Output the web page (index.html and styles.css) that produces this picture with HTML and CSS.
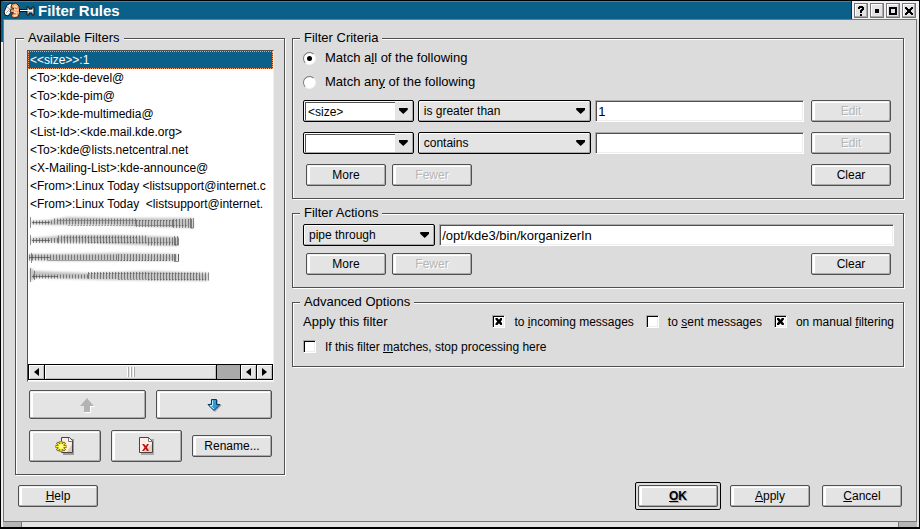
FILE: index.html
```html
<!DOCTYPE html>
<html lang="en">
<head>
<meta charset="utf-8">
<title>Filter Rules</title>
<link rel="stylesheet" href="styles.css">
</head>
<body>
<div class="window">
  <header class="titlebar">
    <svg class="app-icon" width="32" height="18" viewBox="0 0 32 18" aria-hidden="true">
      <path d="M1 11 4 4 8 2 11 4 10 9 5 15 2 14Z" fill="#f4f4f4" stroke="#111"/>
      <path d="M4 6 7 8 9 4M3 12 7 8" fill="none" stroke="#a8a8a8"/>
      <path d="M9 3 13 2 16 5 17 11 15 16 10 17 8 14 11 12 7 11 8 8 11 8 8 6Z" fill="#f3a56f" stroke="#4b2113"/>
      <path d="M11 5 14 6M11 8 15 9M11 11 14 12M11 15 14 14" stroke="#ffe0bd" stroke-width="1.5"/>
      <path d="M12 7 14 8M10 12 13 13" stroke="#d6652e"/>
      <path d="M16 9.5H25" stroke="#111" stroke-width="3"/>
      <path d="M24 6H26V8H29V6H31V14H29V12H26V14H24Z" fill="#ccc" stroke="#111"/>
      <path d="M17 9.5H30" stroke="#fff"/>
    </svg>
    <h1>Filter Rules</h1>
    <div class="window-buttons">
      <button type="button" aria-label="Help"><svg width="10" height="10" viewBox="0 0 10 10"><path d="M2 3V1H3V0H7V1H8V4H7V5H6V7H4V4H5V3H6V2H4V3ZM4 8H6V10H4Z"/></svg></button>
      <button type="button" aria-label="Minimize"><svg width="10" height="10" viewBox="0 0 10 10"><path d="M3 3H7V7H3Z"/></svg></button>
      <button type="button" aria-label="Maximize"><svg width="10" height="10" viewBox="0 0 10 10"><path fill-rule="evenodd" d="M1 1H9V9H1ZM3 3V7H7V3Z"/></svg></button>
      <button type="button" aria-label="Close"><svg width="10" height="10" viewBox="0 0 10 10"><path d="M1 1H3V2H4V3H6V2H7V1H9V3H8V4H7V6H8V7H9V9H7V8H6V7H4V8H3V9H1V7H2V6H3V4H2V3H1Z"/></svg></button>
    </div>
  </header>

  <form class="panel">
    <main class="columns">
      <fieldset class="group filters">
        <legend>Available Filters</legend>
        <div class="listbox">
          <ul role="listbox" aria-label="Available Filters">
            <li role="option" aria-selected="true">&lt;&lt;size&gt;&gt;:1</li>
            <li role="option">&lt;To&gt;:kde-devel@</li>
            <li role="option">&lt;To&gt;:kde-pim@</li>
            <li role="option">&lt;To&gt;:kde-multimedia@</li>
            <li role="option">&lt;List-Id&gt;:&lt;kde.mail.kde.org&gt;</li>
            <li role="option">&lt;To&gt;:kde@lists.netcentral.net</li>
            <li role="option">&lt;X-Mailing-List&gt;:kde-announce@</li>
            <li role="option">&lt;From&gt;:Linux Today &lt;listsupport@internet.c</li>
            <li role="option">&lt;From&gt;:Linux Today  &lt;listsupport@internet.</li>
          </ul>
          <svg class="smudges" width="200" height="74" viewBox="0 0 200 74" aria-hidden="true">
            <defs><filter id="soft" x="-5%" y="-50%" width="110%" height="200%"><feGaussianBlur stdDeviation="1.3 .9"/></filter><filter id="smear" x="-5%" y="-50%" width="110%" height="200%"><feGaussianBlur stdDeviation=".3 .7"/></filter></defs>
            <g filter="url(#soft)" fill="#c4c4c4">
              <path d="M3 8 20 7 40 4 90 5 165 5 166 15 125 14 80 12 25 12 3 11Z"/>
              <path d="M3 25 40 22 90 22 150 24 150 33 110 32 60 30 3 29Z"/>
              <path d="M1 41 30 41 90 40 149 41 149 48 80 48 30 48 1 47Z"/>
              <path d="M2 55 8 58 60 60 120 58 180 60 180 68 80 67 8 65 2 68Z"/>
            </g>
            <g fill="none" stroke="#444" stroke-opacity=".6" filter="url(#smear)">
              <path d="M4 9.500H22M4 27.500H22M1 44.500H22M4 63.500H30"/>
              <path d="M2.500 4V15M2.500 22V32M3.500 40V50M2.500 55V69M6.500 58V67"/>
              <g stroke-dasharray="1 2">
                <path d="M5 9.500H26" stroke-width="4"/><path d="M26 8.500H108" stroke-width="6"/><path d="M108 10.500H145" stroke-width="7"/><path d="M145 10.500H166" stroke-width="9"/>
                <path d="M5 27.500H30" stroke-width="5"/><path d="M30 26.500H120" stroke-width="8"/><path d="M120 28.500H152" stroke-width="8"/>
                <path d="M1 44.500H90" stroke-width="6"/><path d="M90 44.500H151" stroke-width="7"/>
                <path d="M5 63.500H60" stroke-width="4"/><path d="M60 62.500H120" stroke-width="7"/><path d="M120 63.500H181" stroke-width="8"/>
              </g>
              <path d="M30 7.500H150M40 12.500H160M35 24.500H110M60 29.500H145M20 47.500H140M60 60.500H170M90 66.500H178" stroke-dasharray="2 1" stroke-opacity=".4"/>
              <path d="M162.500 5V15H165.500V5M146.500 23V32H149.500V23M146.500 41V48.500H150.500V41"/>
            </g>
          </svg>
          <div class="scrollbar">
            <button type="button" class="left" aria-label="Scroll left"></button>
            <span class="thumb"></span><span class="track"></span>
            <button type="button" class="left" aria-label="Scroll back"></button>
            <button type="button" class="right" aria-label="Scroll right"></button>
          </div>
        </div>
        <div class="list-buttons move">
          <button type="button" class="push" aria-label="Move up" disabled><svg width="16" height="16" viewBox="0 0 16 16"><path d="M9 2 16 10H12V16H6V10Z" fill="#fff"/><path d="M8 1 15 9H11V15H5V9H1Z" fill="#b3b3b3"/></svg></button>
          <button type="button" class="push" aria-label="Move down"><svg width="16" height="16" viewBox="0 0 16 16"><path d="M6 3H12V8H16L9 15 3 9Z" fill="#aaa"/><path d="M5.500 2.500H10.500V7.500H14L8 13.500 2 7.500H5.500Z" fill="#359bd5" stroke="#07385e"/><path d="M6.500 3.500V8.500H4L8 12" fill="none" stroke="#b9edff"/></svg></button>
        </div>
        <div class="list-buttons edit">
          <button type="button" class="push" aria-label="New filter"><svg width="20" height="20" viewBox="0 0 20 20"><path d="M8 3H19V19H8Z" fill="#999"/><path d="M6.500 1.500H14.500L17.500 4.500V16.500H6.500Z" fill="#faeee6" stroke="#444"/><path d="M13.500 2V5.500H17" fill="#fff" stroke="#777"/><path d="M12 16H17V8Z" fill="#eac7b2"/><path d="M6 5V16M0.500 10.500H11.500M2 6.500 10 14.500M10 6.500 2 14.500" stroke="#6d6500" stroke-width="3"/><path d="M6 5.500V15.500M1 10.500H11M2.500 7 9.500 14M9.500 7 2.500 14" stroke="#ffef23" stroke-width="1.500"/><circle cx="6" cy="10.500" r="2.500" fill="#ffff8d"/></svg></button>
          <button type="button" class="push" aria-label="Delete filter"><svg width="16" height="20" viewBox="0 0 16 20"><path d="M3 3H16V19H3Z" fill="#aaa"/><path d="M1.500 1.500H10.500L14.500 5.500V16.500H1.500Z" fill="#faf0e9" stroke="#444"/><path d="M10.500 2V5.500H14" fill="#fff" stroke="#777"/><path d="M5 16H14V8Z" fill="#edcfbd"/><path d="M4 8H6L8 10 9 8H11L9 11.500 11 15H9L7.500 13 6 15H4L6.500 11.500Z" fill="#c50f16"/></svg></button>
          <button type="button" class="push text">Rename...</button>
        </div>
      </fieldset>

      <div class="rules">
        <fieldset class="group criteria">
          <legend>Filter Criteria</legend>
          <label class="option"><input type="radio" name="match" checked><span>Match a<u>l</u>l of the following</span></label>
          <label class="option"><input type="radio" name="match"><span>Match an<u>y</u> of the following</span></label>
          <div class="criterion first">
            <div class="combo editable"><input type="text" value="&lt;size&gt;" aria-label="Field 1"></div>
            <div class="combo function"><select aria-label="Comparison 1"><option>is greater than</option><option>contains</option></select></div>
            <input class="field" type="text" value="1" aria-label="Value 1">
            <button type="button" class="push text" disabled>Edit</button>
          </div>
          <div class="criterion">
            <div class="combo editable"><input type="text" aria-label="Field 2"></div>
            <div class="combo function"><select aria-label="Comparison 2"><option>contains</option><option>is greater than</option></select></div>
            <input class="field" type="text" aria-label="Value 2">
            <button type="button" class="push text" disabled>Edit</button>
          </div>
          <div class="row-buttons">
            <button type="button" class="push text">More</button>
            <button type="button" class="push text" disabled>Fewer</button>
            <button type="button" class="push text last">Clear</button>
          </div>
        </fieldset>

        <fieldset class="group actions">
          <legend>Filter Actions</legend>
          <div class="action">
            <div class="combo"><select aria-label="Action"><option>pipe through</option></select></div>
            <input class="field" type="text" value="/opt/kde3/bin/korganizerIn" aria-label="Command">
          </div>
          <div class="row-buttons">
            <button type="button" class="push text">More</button>
            <button type="button" class="push text" disabled>Fewer</button>
            <button type="button" class="push text last">Clear</button>
          </div>
        </fieldset>

        <fieldset class="group advanced">
          <legend>Advanced Options</legend>
          <div class="apply-to">
            <span class="caption">Apply this filter</span>
            <label class="option"><input type="checkbox" checked><span>to <u>i</u>ncoming messages</span></label>
            <label class="option"><input type="checkbox"><span>to <u>s</u>ent messages</span></label>
            <label class="option"><input type="checkbox" checked><span>on manual <u>f</u>iltering</span></label>
          </div>
          <label class="option"><input type="checkbox"><span>If this filter <u>m</u>atches, stop processing here</span></label>
        </fieldset>
      </div>
    </main>

    <footer class="dialog-buttons">
      <button type="button" class="push text help"><u>H</u>elp</button>
      <span class="default"><button type="submit" class="push text"><u>O</u>K</button></span>
      <button type="button" class="push text"><u>A</u>pply</button>
      <button type="button" class="push text"><u>C</u>ancel</button>
    </footer>
  </form>
  <div class="resize-bar"><span></span><span></span><span></span></div>
</div>
</body>
</html>
```
FILE: styles.css
```css
:root {
  --face: #dcdcdc;
  --button: #e4e4e4;
  --accent: #0a6088;
  --dark: #505050;
  --mid: #ababab;
}
* { box-sizing: border-box; }
body { margin: 0; background: #000; }
body, button, input, select {
  font: 12px/14px "Liberation Sans", Arial, sans-serif;
  color: #000;
}
.window {
  display: flex;
  flex-direction: column;
  min-height: 100vh;
  padding: 0 2px 0 3px;
  border: solid #000;
  border-width: 1px 1px 2px 0;
  background: linear-gradient(#000, #000) left / 1px 100% no-repeat,
    linear-gradient(var(--accent) 41px, #eee 41px) left / 3px 100% no-repeat, #e4e4e4;
}

/* Title bar */
.titlebar {
  display: flex;
  height: 18px;
  background: var(--accent);
  border-top: 1px solid #2d8bb8;
  margin-right: -2px;
}
.app-icon { display: block; flex: none; margin-top: -1px; }
.titlebar h1 {
  flex: 1;
  margin: 0 0 0 3px;
  font-size: 15px;
  line-height: 18px;
  color: #fff;
}
.window-buttons {
  display: flex;
  gap: 2px;
  margin-top: -1px;
  padding: 2px 3px 0 2px;
  background: #f4eff4;
  border-left: 1px solid #222;
}
.window-buttons button {
  display: grid;
  place-items: center;
  width: 14px;
  height: 15px;
  padding: 0;
  border: 1px solid #777;
  background: var(--button);
  box-shadow: inset -1px -1px #aaa, inset 1px 1px #fff;
}

/* Panel */
.panel {
  flex: 1;
  display: flex;
  flex-direction: column;
  gap: 7px;
  padding: 11px 12px 11px 11px;
  background: var(--face);
  border: 1px solid #777;
}
.columns {
  flex: 1;
  display: grid;
  grid-template-columns: minmax(0, 270fr) minmax(0, 612fr);
  gap: 7px;
}
.group {
  min-width: 0;
  margin: 0;
  padding: 0 9px 12px 10px;
  border: 1px solid var(--dark);
  box-shadow: 1px 1px #fff, inset 1px 1px #fff;
}
.group legend {
  margin-left: -3px;
  padding: 0 4px;
  background: var(--face);
}
.group legend, .criteria .option, .caption, .field { font-size: 13px; }
.push {
  display: grid;
  place-items: center;
  padding: 0;
  border: 1px solid var(--dark);
  border-radius: 2px;
  background: var(--button);
  box-shadow: inset -1px -1px var(--mid), inset 1px 1px #f0f0f0, inset 3px 2px #fff;
}
.push.text {
  display: block;
  flex: none;
  width: 80px;
  height: 22px;
}
.push:disabled { color: #b5b5b5; text-shadow: 1px 1px #fff; }

/* Filter list */
.filters {
  display: flex;
  flex-direction: column;
  padding: 5px 10px 12px 11px;
}
.listbox {
  flex: 1;
  display: flex;
  flex-direction: column;
  min-width: 0;
  border: 1px solid;
  border-color: var(--dark) #f0f0f0 #f0f0f0 var(--dark);
  background: #fff;
}
.listbox ul { margin: 0; padding: 0; list-style: none; }
.listbox li {
  padding: 2px;
  overflow: hidden;
  white-space: pre;
}
.listbox li[aria-selected="true"] {
  padding: 1px;
  border: 1px dotted #ff9c62;
  background: var(--accent);
  color: #fff;
}
.smudges { display: block; }
.scrollbar {
  display: flex;
  gap: 1px;
  height: 16px;
  margin-top: auto;
  margin-bottom: 1px;
  border: 1px solid #000;
  background: #000;
}
.scrollbar button, .thumb {
  border: 0;
  padding: 0;
  background: var(--button);
  box-shadow: inset 1px 1px #fff, inset -1px -1px #bbb;
}
.scrollbar button { display: grid; place-items: center; width: 15px; }
.scrollbar button::before {
  content: "";
  width: 5px;
  height: 8px;
  background: #000;
  clip-path: polygon(100% 0, 100% 100%, 0 50%);
}
.scrollbar .right::before { clip-path: polygon(0 0, 0 100%, 100% 50%); }
.thumb { flex: 172; display: grid; place-items: center; }
.thumb::before {
  content: "";
  width: 8px;
  height: 10px;
  background: repeating-linear-gradient(90deg, #fff 0 1px, #aaa 1px 2px, var(--button) 2px 3px);
}
.track { flex: 23; background: #aaa; }
.list-buttons { display: flex; gap: 10px; align-items: center; margin: 8px 2px 0; }
.list-buttons .push:not(.text) { flex: 1; }
.move .push { height: 29px; }
.edit { margin-top: 11px; }
.edit .push:not(.text) { height: 32px; }

/* Rule groups */
.rules { display: flex; flex-direction: column; gap: 7px; }
.option { display: flex; align-items: center; gap: 9px; }
.option input { flex: none; appearance: none; width: 13px; height: 13px; margin: 0; background: #fff; }
.option input[type="radio"] {
  display: grid;
  place-items: center;
  border: 1px solid;
  border-color: #777 #f4f4f4 #f4f4f4 #777;
  border-radius: 50%;
}
.option input[type="radio"]:checked::before {
  content: "";
  width: 5px;
  height: 5px;
  border-radius: 50%;
  background: #000;
}
.option input[type="checkbox"] {
  display: grid;
  place-items: center;
  border: 1px solid;
  border-color: var(--mid) #fff #fff var(--mid);
  box-shadow: inset 1px 1px #000, inset -1px -1px #eee;
}
.option input[type="checkbox"]:checked::before {
  content: "";
  width: 7px;
  height: 7px;
  background: #000;
  clip-path: polygon(0 0, 29% 0, 50% 25%, 71% 0, 100% 0, 100% 20%, 75% 50%, 100% 80%, 100% 100%, 71% 100%, 50% 75%, 29% 100%, 0 100%, 0 80%, 25% 50%, 0 20%);
}
.criteria { padding-top: 1px; }
.criteria .option { height: 24px; }
.criterion { display: flex; gap: 4px; margin-top: 10px; }
.criterion.first { margin-top: 6px; }
.criterion .push { margin: 0 3px; }
.criterion .editable { flex: 111 1 0; }
.criterion .function { flex: 175 1 0; }
.criterion .field { flex: 207 1 0; }
.combo {
  display: grid;
  grid-template-columns: minmax(0, 1fr) 18px;
  align-items: center;
  min-width: 0;
  height: 22px;
  border: 1px solid #000;
  border-radius: 2px;
  background: var(--button);
  box-shadow: inset -1px -1px var(--mid), inset 1px 1px #fff;
}
.combo::after {
  content: "";
  grid-area: 1 / 2;
  width: 9px;
  height: 6px;
  margin-left: 4px;
  background: #000;
  clip-path: polygon(0 0, 100% 0, 100% 30%, 50% 100%, 0 30%);
  pointer-events: none;
}
.combo select {
  grid-area: 1 / 1 / 2 / 3;
  width: 100%;
  height: 20px;
  padding: 0 20px 0 5px;
  border: 0;
  appearance: none;
  background: transparent;
}
.combo input {
  width: auto;
  min-width: 0;
  height: 18px;
  margin-left: 1px;
  padding: 0 2px;
  border: solid var(--dark);
  border-width: 1px 0 0 1px;
  background: #fff;
}
.field {
  min-width: 0;
  height: 22px;
  padding: 0 2px;
  border: 1px solid;
  border-color: var(--mid) #fff #fff var(--mid);
  background: #fff;
  box-shadow: inset 1px 1px var(--dark), inset -1px -1px #eee;
}
.row-buttons { display: flex; gap: 6px; margin: 10px 3px 0; }
.row-buttons .last { margin-left: auto; }
.actions { padding-top: 4px; }
.actions .row-buttons { margin-top: 7px; }
.action { display: flex; gap: 4px; }
.action .combo { flex: 132 1 0; }
.action .field { flex: 455 1 0; }
.advanced { padding-bottom: 7px; }
.apply-to { display: flex; gap: 12px; align-items: center; }
.apply-to .caption { margin-right: auto; }
.advanced .option { height: 25px; }

/* Dialog buttons */
.dialog-buttons {
  display: flex;
  align-items: center;
  gap: 12px;
  padding: 0 2px 0 3px;
}
.dialog-buttons .help { margin-right: auto; }
.default {
  margin-right: -3px;
  padding: 2px;
  border: 1px solid #000;
  border-radius: 2px;
}
.default .push { font-weight: bold; text-shadow: 1px 1px #aaa; }
.resize-bar { display: flex; height: 5px; }
.resize-bar span { flex: none; width: 18px; background: #b5b5b5; }
.resize-bar span:nth-child(2) {
  flex: 1;
  border: solid #777;
  border-width: 0 1px;
  background: var(--button);
}
```
